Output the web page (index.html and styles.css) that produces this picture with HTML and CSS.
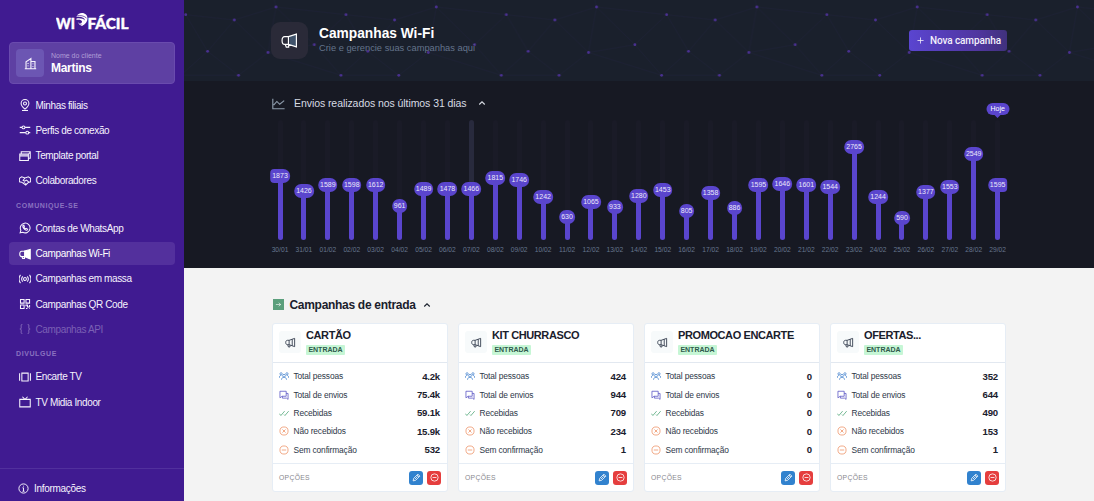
FILE: index.html
```html
<!DOCTYPE html>
<html lang="pt-BR">
<head>
    <meta charset="UTF-8">
    <meta name="viewport" content="width=device-width, initial-scale=1.0">
    <title>WiFácil - Campanhas Wi-Fi</title>
    <link rel="stylesheet" href="styles.css">
</head>
<body>
    <svg class="sprite" width="0" height="0">
        <symbol id="i-horn" viewBox="0 0 16 16"><path d="M14 2v12L6 11.2V4.8zM6 4.8H3.5C2 4.8 1 6.2 1 8s1 3.200 2.500 3.200H6M4 11.200l1 3.300h2.200V11.700M10.500 3.300v9.400"/></symbol>
        <symbol id="i-people" viewBox="0 0 16 16"><circle cx="8" cy="7.500" r="2.200"/><circle cx="3.300" cy="4.500" r="1.800"/><circle cx="12.700" cy="4.500" r="1.800"/><path d="M4 14c0-2.500 1.800-4 4-4s4 1.500 4 4M.5 11c0-2.500 1-4 3-4M15.500 11c0-2.500-1-4-3-4"/></symbol>
        <symbol id="i-chat" viewBox="0 0 16 16"><path d="M1.500 2h10v8H5l-3.500 2.500zM11.500 5.500h3V15L12 13H5.500v-3"/></symbol>
        <symbol id="i-checks" viewBox="0 0 16 16"><path d="M.5 9l2.500 3 6-7M8 10.500L9.500 12l6-7"/></symbol>
        <symbol id="i-error" viewBox="0 0 16 16"><circle cx="8" cy="8" r="6.500"/><path d="M5.500 5.500l5 5M10.500 5.500l-5 5"/></symbol>
        <symbol id="i-minus" viewBox="0 0 16 16"><circle cx="8" cy="8" r="6.500"/><path d="M4.500 8h7"/></symbol>
        <symbol id="i-pencil" viewBox="0 0 16 16"><path d="M2 14l1-4.500L10.500 2 14 5.500 6.500 13zM9 3.500L12.500 7M5 11l5-5"/></symbol>
        <symbol id="i-up" viewBox="0 0 16 16"><path d="M2.500 11L8 5.500l5.500 5.500"/></symbol>
    </svg>

    <aside class="sidebar">
        <svg class="logo" viewBox="0 0 78 20">
            <text x="0" y="16.600" textLength="19" lengthAdjust="spacingAndGlyphs">WI</text>
            <path class="logo-mark" d="M20.500 5c.8-3 3-4 5.500-4 3.200 0 5.500 2.300 5.500 5.500 0 3-2 5.700-5.500 7.500-2-.8-3.500-2-4.200-3.500 3 1 4.500.5 4.200-1-.4-1.500-2.500-2-5.500-1.500V6.500c4-.5 7 .2 8.500 2C28.500 5.500 25 4.300 20.500 5z"/>
            <path class="logo-wave" d="M21 3.800c3.500-.7 7 0 9.500 2.200M21 10.800c1.500.3 3 .6 4.500 1.500"/>
            <text x="31.500" y="16.600" textLength="41" lengthAdjust="spacingAndGlyphs">FÁCIL</text>
        </svg>

        <div class="client">
            <div class="client-icon"><svg class="icon" viewBox="0 0 16 16"><path d="M1 14.500h14M2.500 14.500V6L8.500 2v12.500M8.500 5.500h5v9M5 7.500v1M5 10.500v1M11 8v1M11 11v1"/></svg></div>
            <div class="client-info">
                <span class="client-label">Nome do cliente</span>
                <strong class="client-name">Martins</strong>
            </div>
        </div>

        <nav class="menu">
            <a class="menu-item"><svg class="icon" viewBox="0 0 16 16"><path d="M8 13.500C4.500 10.500 2.800 8.500 2.800 5.900a5.200 5.200 0 0 1 10.400 0c0 2.600-1.700 4.600-5.200 7.600z"/><circle cx="8" cy="6" r="2"/><path d="M4 15.300h8"/></svg>Minhas filiais</a>
            <a class="menu-item"><svg class="icon" viewBox="0 0 16 16"><path d="M1 4.500h3M8 4.500h7M1 11.500h8M13 11.500h2"/><circle cx="6" cy="4.500" r="1.900"/><circle cx="11" cy="11.500" r="1.900"/></svg>Perfis de conexão</a>
            <a class="menu-item"><svg class="icon" viewBox="0 0 16 16"><path d="M1 5.500h11.500V14H1zM1 7.800h11.500M3 5.500V2.300h12V11h-2.500M12.500 5.500L15 3"/></svg>Template portal</a>
            <a class="menu-item"><svg class="icon" viewBox="0 0 16 16"><path d="M.5 4.500l3-2L8 4l4.500-1.500 3 2v4.500L12.500 10 9 13.500 3.500 9.500.5 9zM8 4L5.500 7l2 1.200 2.500-1.400 3.500 3M6 11.300l1.500-1.500M8 12.700L9.500 11"/></svg>Colaboradores</a>

            <span class="menu-title">COMUNIQUE-SE</span>
            <a class="menu-item"><svg class="icon" viewBox="0 0 16 16"><path d="M1.500 14.500l1-3.500A6.500 6.500 0 1 1 5 13.600zM5.500 4.500c-1.500 2 2 7 5 6.500l1-1.500-2-1-1 .8-2-2 .7-1-.7-2z"/></svg>Contas de WhatsApp</a>
            <a class="menu-item active"><svg class="icon" viewBox="0 0 16 16"><path d="M8 4.300H3.500C2 4.300 1 6 1 8s1 3.500 2.500 3.500H8M4 11.500l.8 2.500h2.500v-2.500"/><path class="filled" d="M7.500 4l7.500-2v12.500l-7.500-3z"/></svg>Campanhas Wi-Fi</a>
            <a class="menu-item"><svg class="icon" viewBox="0 0 16 16"><circle cx="8" cy="8" r="1.900"/><path d="M5 4.500c-1.700 2-1.700 5 0 7M11 4.500c1.700 2 1.700 5 0 7M2 2.500C-.4 5.800-.4 10.200 2 13.500M14 2.500c2.400 3.300 2.400 7.700 0 11"/></svg>Campanhas em massa</a>
            <a class="menu-item"><svg class="icon" viewBox="0 0 16 16"><path d="M2 2h4.800v4.800H2zM9.300 2h4.800v4.800H9.300zM2 9.300h4.800v4.800H2zM9.300 11V9.300h2V12h2.800V9.300M9.300 14.100h2M13.500 14.100h.8"/></svg>Campanhas QR Code</a>
            <a class="menu-item disabled"><svg class="icon" viewBox="0 0 16 16"><path d="M4.500 2C2 2 3 4 3 6c0 1.300-1 2-2 2 1 0 2 .7 2 2 0 2-1 4 1.500 4M11.500 2C14 2 13 4 13 6c0 1.300 1 2 2 2-1 0-2 .7-2 2 0 2 1 4-1.500 4"/></svg>Campanhas API</a>

            <span class="menu-title">DIVULGUE</span>
            <a class="menu-item"><svg class="icon" viewBox="0 0 16 16"><path d="M3.800 2.800h8.400v10.400H3.800zM.8 3v10M15.200 3v10"/></svg>Encarte TV</a>
            <a class="menu-item"><svg class="icon" viewBox="0 0 16 16"><path d="M1 4.500h14v10H1zM4.500 1L8 4.500 11.500 1"/></svg>TV Midia Indoor</a>
        </nav>

        <a class="info"><svg class="icon" viewBox="0 0 16 16"><circle cx="8" cy="8" r="6.700"/><path d="M8 7v4.800M6.500 7H8M6.500 12h3M8 4v1.200"/></svg>Informações</a>
    </aside>

    <main class="main">
        <header class="header">
            <svg class="header-bg">
                <defs>
                    <pattern id="net" width="160.300" height="120" patternUnits="userSpaceOnUse">
                        <path class="net-line" d="M1.700 14.700L50.300 20 92 7l70 7.700M50.300 20L23.600 51.300 1.700 14.700M50.300 20L84 52.500l46.300-7.800L92 7 84 52.500 54.500 75.300 23.600 51.300M130.300 44.700L157 75.300 84 52.500M130.300 44.700L162 14.700M54.500 75.300l-57.800 0M92 7L88-10M23.600 51.300L-3.300 75.300"/>
                        <g class="net-dot"><circle cx="1.700" cy="14.700" r="1.400"/><circle cx="92" cy="7" r="1.400"/><circle cx="50.300" cy="20" r="1.400"/><circle cx="23.600" cy="51.300" r="1.400"/><circle cx="84" cy="52.500" r="1.400"/><circle cx="130.300" cy="44.700" r="1.400"/><circle cx="54.500" cy="75.300" r="1.400"/><circle cx="157" cy="75.300" r="1.400"/></g>
                    </pattern>
                </defs>
                <rect width="100%" height="100%" fill="url(#net)"/>
            </svg>
            <div class="container header-row">
                <div class="header-icon"><svg class="icon" viewBox="0 0 16 16"><path class="horn-shade" d="M8 4l6.500-2v12L8 12z"/><path d="M7 4.300L14.500 2v12L7 11.700zM7 4.300H3.500C2 4.300 1 6 1 8s1 3.700 2.500 3.700H7M4 11.700l1 2.600h2.200v-2.600"/></svg></div>
                <div class="header-text">
                    <h1>Campanhas Wi-Fi</h1>
                    <p>Crie e gerencie suas campanhas aqui</p>
                </div>
                <button class="new-btn"><svg class="icon" viewBox="0 0 16 16"><path d="M8 1v14M1 8h14"/></svg>Nova campanha</button>
            </div>
        </header>

        <section class="chart-section">
            <div class="container">
                <h2 class="chart-title"><svg class="icon chart-icon" viewBox="0 0 16 16"><path d="M1 2v12.500h14.500M2 10l4-4.500L9.500 9 15 4.500"/></svg>Envios realizados nos últimos 31 dias<svg class="icon up"><use href="#i-up"/></svg></h2>
                <div class="chart" id="chart"></div>
            </div>
        </section>

        <section class="campaigns container">
            <h2 class="campaigns-title"><span class="entry-icon"><svg class="icon" viewBox="0 0 16 16"><path d="M2 8h11M8.500 4L13 8l-4.500 4"/></svg></span>Campanhas de entrada<svg class="icon up"><use href="#i-up"/></svg></h2>
            <div class="cards" id="cards"></div>
        </section>
    </main>

    <script src="script.js"></script>
</body>
</html>
```

FILE: styles.css
```css
* {
    box-sizing: border-box;
}

body {
    font-family: "Liberation Sans", Arial, sans-serif;
    background-color: #f3f3f3;
    margin: 0;
    height: 501px;
    display: flex;
    overflow: hidden;
}

h1, h2, h3, p {
    margin: 0;
}

.sprite {
    position: absolute;
}

.icon {
    fill: none;
    stroke: currentColor;
    stroke-width: 1.4;
    flex-shrink: 0;
}

/* sidebar */
.sidebar {
    width: 184px;
    height: 501px;
    flex-shrink: 0;
    background-color: #401b91;
    color: #f6f3fd;
    display: flex;
    flex-direction: column;
}

.logo {
    width: 78px;
    height: 20px;
    margin: 12px 0 10px 55.500px;
    flex-shrink: 0;
}

.logo text {
    font-family: Lato, sans-serif;
    font-size: 15px;
    font-weight: 900;
    fill: #fff;
    stroke: #fff;
    stroke-width: 0.4;
}

.logo-mark {
    fill: #fff;
}

.logo-wave {
    fill: none;
    stroke: #401b91;
    stroke-width: 0.7;
}

.client {
    height: 42px;
    margin: 0 9px;
    padding: 0 6px;
    background-color: #5e40a3;
    border: 1px solid #6a4bae;
    border-radius: 4px;
    display: flex;
    align-items: center;
    gap: 7px;
}

.client-icon {
    width: 28px;
    height: 28px;
    border-radius: 4px;
    background-color: #6c56b3;
    display: flex;
    align-items: center;
    justify-content: center;
}

.client-icon .icon {
    width: 13px;
    height: 13px;
}

.client-info {
    display: flex;
    flex-direction: column;
}

.client-label {
    font-size: 7px;
    line-height: 9px;
    color: #b09ed6;
}

.client-name {
    font-size: 12px;
    letter-spacing: -0.300px;
    line-height: 16px;
    color: #fff;
}

.menu {
    margin: 9.400px 9px 0;
    display: flex;
    flex-direction: column;
    gap: 2px;
}

.menu-item {
    height: 23.300px;
    padding-left: 9.500px;
    border-radius: 4px;
    font-size: 10px;
    letter-spacing: -0.370px;
    display: flex;
    align-items: center;
    gap: 5px;
}

.menu-item .icon {
    width: 12px;
    height: 12px;
}

.menu-item.active {
    background-color: #53309d;
    color: #fff;
}

.menu-item.disabled {
    color: #7b60b4;
}

.filled {
    fill: currentColor;
}

.menu-title {
    height: 20px;
    line-height: 22px;
    padding-left: 7px;
    font-size: 7px;
    font-weight: bold;
    letter-spacing: 0.600px;
    color: #8a72c0;
}

.info {
    margin-top: auto;
    height: 33px;
    padding: 7px 0 0 18px;
    border-top: 1px solid #51309d;
    font-size: 10px;
    letter-spacing: -0.300px;
    color: #f6f3fd;
    display: flex;
    align-items: center;
    gap: 5px;
}

.info .icon {
    width: 11px;
    height: 11px;
}

/* header */
.main {
    flex: 1;
    min-width: 0;
}

.container {
    width: 734px;
    margin: 0 auto;
}

.header {
    position: relative;
    height: 81px;
    background-color: #1a202c;
}

.header-bg {
    position: absolute;
    width: 100%;
    height: 100%;
}

.net-line {
    fill: none;
    stroke: #1d2035;
    stroke-width: 0.8;
}

.net-dot {
    fill: #4a3092;
}

.header-row {
    position: relative;
    height: 81px;
    display: flex;
    align-items: center;
}

.header-icon {
    width: 37px;
    height: 37px;
    margin-left: -1px;
    border-radius: 9px;
    background-color: #2a2a38;
    color: #fff;
    display: flex;
    align-items: center;
    justify-content: center;
}

.header-icon .icon {
    width: 17px;
    height: 17px;
    stroke-width: 1.1;
}

.header-icon .horn-shade {
    fill: #40536b;
    stroke: none;
}

.header-text {
    margin: 0 auto 0 11px;
}

.header-text h1 {
    font-size: 13.750px;
    line-height: 14px;
    color: #fff;
}

.header-text p {
    font-size: 9.300px;
    line-height: 14px;
    color: #64748b;
}

.new-btn {
    width: 98px;
    height: 21px;
    margin-right: -1px;
    padding: 0 0 0 8px;
    border: none;
    border-radius: 3px;
    background: linear-gradient(90deg, #5a45d0, #50369f 70%, #40317c);
    color: #f3f0fb;
    font-family: Roboto, sans-serif;
    font-size: 10px;
    letter-spacing: -0.100px;
    font-weight: 500;
    display: flex;
    align-items: center;
    gap: 6px;
}

.new-btn .icon {
    width: 7px;
    height: 7px;
    stroke-width: 1.8;
}

/* chart */
.chart-section {
    height: 187px;
    background-color: #171923;
}

.chart-title {
    height: 39px;
    padding-top: 5px;
    font-size: 10.500px;
    letter-spacing: -0.070px;
    font-weight: normal;
    color: #d8dce3;
    display: flex;
    align-items: center;
}

.chart-icon {
    width: 13px;
    height: 13px;
    margin-right: 9px;
    color: #8f9dad;
}

.up {
    width: 8px;
    height: 8px;
    margin-left: 11px;
    stroke-width: 2.200;
}

.chart {
    display: flex;
    justify-content: space-between;
}

.day {
    position: relative;
    width: 16px;
    display: flex;
    flex-direction: column;
    align-items: center;
}

.track {
    width: 5px;
    height: 120px;
    border-radius: 3px;
    background-color: #1a1b27;
    display: flex;
    flex-direction: column;
    justify-content: flex-end;
}

.day.hover .track {
    background-color: #282a3d;
}

.bar {
    position: relative;
    border-radius: 3px;
    background-color: #5a45cd;
}

.value {
    position: absolute;
    top: -10px;
    left: 50%;
    transform: translateX(-50%);
    height: 14px;
    padding: 0 2px;
    border-radius: 7px;
    background-color: #5a45cd;
    color: #ebe8fa;
    font-size: 7px;
    line-height: 14px;
}

.day:first-child .value {
    border-radius: 4px 7px 7px 4px;
}

.day:last-child .value {
    border-radius: 7px 4px 4px 7px;
}

.date {
    margin-top: 5px;
    font-size: 6.700px;
    line-height: 9px;
    color: #66768e;
}

.today {
    position: absolute;
    top: -17px;
    left: 50%;
    transform: translateX(-50%);
    width: 23px;
    height: 12px;
    border-radius: 6px;
    background-color: #5a45cd;
    color: #fff;
    font-size: 7px;
    line-height: 12px;
    text-align: center;
}

.today::after {
    content: "";
    position: absolute;
    top: 12px;
    left: 8.500px;
    border: 3px solid transparent;
    border-top-color: #5a45cd;
    border-bottom: none;
}

/* campaigns */
.campaigns-title {
    height: 55px;
    padding-top: 18px;
    font-size: 12px;
    letter-spacing: -0.300px;
    color: #1a202c;
    display: flex;
    align-items: center;
}

.campaigns-title .up {
    margin-left: 7px;
}

.entry-icon {
    width: 11px;
    height: 11px;
    margin: 0 5.500px 0 1px;
    background-color: #5b9f7c;
    color: #fff;
    display: flex;
    align-items: center;
    justify-content: center;
}

.entry-icon .icon {
    width: 7px;
    height: 7px;
}

.cards {
    display: grid;
    grid-template-columns: repeat(4, 1fr);
    gap: 10px;
}

.card {
    height: 169px;
    background-color: #fff;
    border: 1px solid #e6edf5;
    border-radius: 3px;
    display: flex;
    flex-direction: column;
}

.card-head {
    height: 39px;
    padding: 0 6px;
    border-bottom: 1px solid #e2e8f0;
    display: flex;
    align-items: center;
}

.card-icon {
    width: 22px;
    height: 22px;
    margin: -2px 5px 0 0;
    border-radius: 3px;
    background-color: #f7fafb;
    color: #2d3748;
    display: flex;
    align-items: center;
    justify-content: center;
}

.card-icon .icon {
    width: 11px;
    height: 11px;
    stroke-width: 1.250;
}

.card-head h3 {
    margin-top: -2px;
    font-size: 11px;
    letter-spacing: -0.400px;
    line-height: 13px;
    color: #1a202c;
}

.tag {
    display: block;
    width: 39px;
    height: 10px;
    margin-top: 3px;
    border-radius: 1px;
    background-color: #c6f6d5;
    color: #2f5a4c;
    font-size: 7px;
    line-height: 10px;
    font-weight: bold;
    text-align: center;
}

.stats {
    flex: 1;
    padding: 4px 7px 0 6px;
}

.stat {
    height: 18.400px;
    font-size: 8.400px;
    letter-spacing: -0.130px;
    color: #2d3748;
    display: flex;
    align-items: center;
}

.stat .icon {
    width: 10px;
    height: 10px;
    margin-right: 4.500px;
    stroke-width: 1.250;
}

.stat strong {
    margin-left: auto;
    font-size: 9.600px;
    letter-spacing: -0.200px;
    color: #1a202c;
}

.blue {
    color: #4a86cf;
}

.indigo {
    color: #5a55c4;
}

.green {
    color: #4fa777;
}

.orange {
    color: #ee9468;
}

.card-foot {
    height: 28px;
    padding: 0 6px;
    border-top: 1px solid #e6edf5;
    font-size: 6.800px;
    letter-spacing: 0.300px;
    color: #88888e;
    display: flex;
    align-items: center;
    gap: 4px;
}

.card-foot span {
    margin-right: auto;
}

.btn {
    width: 14px;
    height: 14px;
    padding: 0;
    border: none;
    border-radius: 3px;
    color: #fff;
    display: flex;
    align-items: center;
    justify-content: center;
}

.btn .icon {
    width: 9px;
    height: 9px;
}

.btn.edit {
    background-color: #3182ce;
}

.btn.stop {
    background-color: #e53e3e;
}
```

FILE: script.js
```js
const maxSends = 3700;
const sends = [
    ['30/01', 1873], ['31/01', 1426], ['01/02', 1589], ['02/02', 1598], ['03/02', 1612],
    ['04/02', 961], ['05/02', 1489], ['06/02', 1478], ['07/02', 1466], ['08/02', 1815],
    ['09/02', 1746], ['10/02', 1242], ['11/02', 630], ['12/02', 1065], ['13/02', 933],
    ['14/02', 1280], ['15/02', 1453], ['16/02', 805], ['17/02', 1358], ['18/02', 886],
    ['19/02', 1595], ['20/02', 1646], ['21/02', 1601], ['22/02', 1544], ['23/02', 2765],
    ['24/02', 1244], ['25/02', 590], ['26/02', 1377], ['27/02', 1553], ['28/02', 2549],
    ['29/02', 1595]
];

const campaigns = [
    { name: 'CARTÃO', values: ['4.2k', '75.4k', '59.1k', '15.9k', '532'] },
    { name: 'KIT CHURRASCO', values: ['424', '944', '709', '234', '1'] },
    { name: 'PROMOCAO ENCARTE', values: ['0', '0', '0', '0', '0'] },
    { name: 'OFERTAS...', values: ['352', '644', '490', '153', '1'] }
];

const rows = [
    ['people', 'blue', 'Total pessoas'],
    ['chat', 'indigo', 'Total de envios'],
    ['checks', 'green', 'Recebidas'],
    ['error', 'orange', 'Não recebidos'],
    ['minus', 'orange', 'Sem confirmação']
];

function icon(name, color = '') {
    return `<svg class="icon ${color}"><use href="#i-${name}"/></svg>`;
}

document.getElementById('chart').innerHTML = sends.map(([date, total], i) => `
    <div class="day${date === '07/02' ? ' hover' : ''}">
        ${i === sends.length - 1 ? '<span class="today">Hoje</span>' : ''}
        <div class="track">
            <div class="bar" style="height: ${total / maxSends * 100}%"><span class="value">${total}</span></div>
        </div>
        <span class="date">${date}</span>
    </div>`).join('');

document.getElementById('cards').innerHTML = campaigns.map(campaign => `
    <article class="card">
        <div class="card-head">
            <div class="card-icon">${icon('horn')}</div>
            <div>
                <h3>${campaign.name}</h3>
                <span class="tag">ENTRADA</span>
            </div>
        </div>
        <div class="stats">
            ${rows.map(([name, color, label], i) => `<div class="stat">${icon(name, color)}${label}<strong>${campaign.values[i]}</strong></div>`).join('')}
        </div>
        <div class="card-foot">
            <span>OPÇÕES</span>
            <button class="btn edit">${icon('pencil')}</button>
            <button class="btn stop">${icon('minus')}</button>
        </div>
    </article>`).join('');
```
